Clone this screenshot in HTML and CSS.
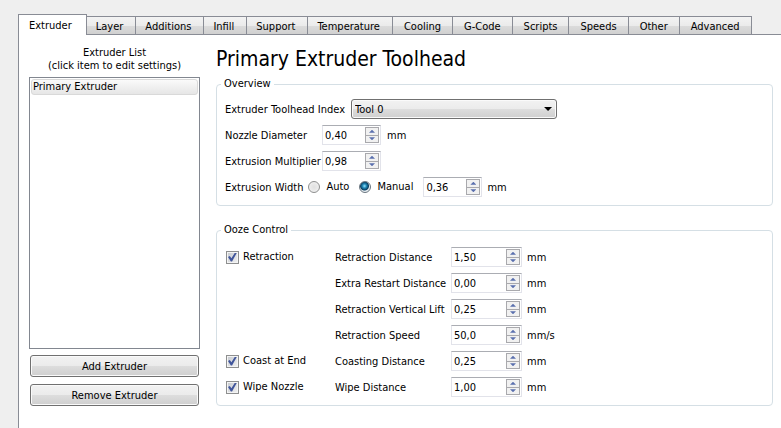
FILE: index.html
```html
<!DOCTYPE html>
<html lang="en">
<head>
<meta charset="utf-8">
<meta name="viewport" content="width=device-width, initial-scale=1">
<title>Extruder Settings</title>
<link rel="stylesheet" href="styles.css">
</head>
<body>
<nav class="tabs" role="tablist">
  <button class="tab tab-active" type="button" role="tab" aria-selected="true">Extruder</button>
  <button class="tab" type="button" role="tab">Layer</button>
  <button class="tab" type="button" role="tab">Additions</button>
  <button class="tab" type="button" role="tab">Infill</button>
  <button class="tab" type="button" role="tab">Support</button>
  <button class="tab" type="button" role="tab">Temperature</button>
  <button class="tab" type="button" role="tab">Cooling</button>
  <button class="tab" type="button" role="tab">G-Code</button>
  <button class="tab" type="button" role="tab">Scripts</button>
  <button class="tab" type="button" role="tab">Speeds</button>
  <button class="tab" type="button" role="tab">Other</button>
  <button class="tab" type="button" role="tab">Advanced</button>
</nav>
<main class="panel">
  <section class="side">
    <p class="caption">Extruder List<br>(click item to edit settings)</p>
    <ul class="list">
      <li><button class="list-item" type="button">Primary Extruder</button></li>
    </ul>
    <button class="push" type="button">Add Extruder</button>
    <button class="push" type="button">Remove Extruder</button>
  </section>
  <section class="content">
    <h1 class="title">Primary Extruder Toolhead</h1>
    <fieldset class="group">
      <legend>Overview</legend>
      <div class="row">
        <label class="text" for="tool">Extruder Toolhead Index</label>
        <span class="combo"><select id="tool"><option>Tool 0</option></select></span>
      </div>
      <div class="row">
        <label class="text name" for="nozzle">Nozzle Diameter</label>
        <span class="spin"><input id="nozzle" type="text" value="0,40"><span class="arrows"><button type="button" class="up" aria-label="Increase"></button><button type="button" class="down" aria-label="Decrease"></button></span></span>
        <span class="text">mm</span>
      </div>
      <div class="row">
        <label class="text name" for="mult">Extrusion Multiplier</label>
        <span class="spin"><input id="mult" type="text" value="0,98"><span class="arrows"><button type="button" class="up" aria-label="Increase"></button><button type="button" class="down" aria-label="Decrease"></button></span></span>
      </div>
      <div class="row row-tight">
        <span class="text">Extrusion Width</span>
        <label class="choice"><input class="radio" type="radio" name="width">Auto</label>
        <label class="choice"><input class="radio" type="radio" name="width" checked>Manual</label>
        <span class="spin"><input type="text" value="0,36" aria-label="Extrusion Width"><span class="arrows"><button type="button" class="up" aria-label="Increase"></button><button type="button" class="down" aria-label="Decrease"></button></span></span>
        <span class="text">mm</span>
      </div>
    </fieldset>
    <fieldset class="group">
      <legend>Ooze Control</legend>
      <div class="ooze">
        <label class="toggle"><input class="check" type="checkbox" checked>Retraction</label>
        <label class="text field" for="dist">Retraction Distance</label>
        <span class="spin"><input id="dist" type="text" value="1,50"><span class="arrows"><button type="button" class="up" aria-label="Increase"></button><button type="button" class="down" aria-label="Decrease"></button></span></span>
        <span class="text unit">mm</span>
        <label class="text field" for="restart">Extra Restart Distance</label>
        <span class="spin"><input id="restart" type="text" value="0,00"><span class="arrows"><button type="button" class="up" aria-label="Increase"></button><button type="button" class="down" aria-label="Decrease"></button></span></span>
        <span class="text unit">mm</span>
        <label class="text field" for="lift">Retraction Vertical Lift</label>
        <span class="spin"><input id="lift" type="text" value="0,25"><span class="arrows"><button type="button" class="up" aria-label="Increase"></button><button type="button" class="down" aria-label="Decrease"></button></span></span>
        <span class="text unit">mm</span>
        <label class="text field" for="speed">Retraction Speed</label>
        <span class="spin"><input id="speed" type="text" value="50,0"><span class="arrows"><button type="button" class="up" aria-label="Increase"></button><button type="button" class="down" aria-label="Decrease"></button></span></span>
        <span class="text unit">mm/s</span>
        <label class="toggle"><input class="check" type="checkbox" checked>Coast at End</label>
        <label class="text field" for="coast">Coasting Distance</label>
        <span class="spin"><input id="coast" type="text" value="0,25"><span class="arrows"><button type="button" class="up" aria-label="Increase"></button><button type="button" class="down" aria-label="Decrease"></button></span></span>
        <span class="text unit">mm</span>
        <label class="toggle"><input class="check" type="checkbox" checked>Wipe Nozzle</label>
        <label class="text field" for="wipe">Wipe Distance</label>
        <span class="spin"><input id="wipe" type="text" value="1,00"><span class="arrows"><button type="button" class="up" aria-label="Increase"></button><button type="button" class="down" aria-label="Decrease"></button></span></span>
        <span class="text unit">mm</span>
      </div>
    </fieldset>
  </section>
</main>
</body>
</html>
```
FILE: styles.css
```css
* { box-sizing: border-box; }

body {
  margin: 0;
  min-height: 100vh;
  display: flex;
  flex-direction: column;
  padding: 14px 0 0 18px;
  background: #efefef;
  color: #000;
  font: 11px/16px Tahoma, "DejaVu Sans Condensed", "DejaVu Sans", sans-serif;
}

button, input, select { font: inherit; color: inherit; margin: 0; }

/* Tab bar */
.tabs {
  display: flex;
  align-items: flex-end;
  position: relative;
  margin-bottom: -1px;
}
.tab {
  height: 19px;
  padding: 2px 12px 0 9px;
  border: 1px solid #898c95;
  background: linear-gradient(#f3f3f3, #ebebeb 50%, #dcdcdc 51%, #d0d0d0);
  line-height: 15px;
  white-space: nowrap;
}
.tab:nth-child(n + 7) { padding: 2px 11px 0; }
.tab + .tab { border-left-width: 0; }
.tab-active {
  height: 21px;
  padding: 0 14px 0 10px;
  border-bottom: 0;
  background: #fff;
}

/* Page */
.panel {
  flex: 1;
  display: flex;
  gap: 16px;
  padding: 10px 8px 22px 10px;
  border: 1px solid #898c95;
  border-width: 1px 0 0 1px;
  background: #fff;
}
.side {
  width: 171px;
  flex: none;
  display: flex;
  flex-direction: column;
}
.caption {
  margin: 0 0 5px;
  padding-top: 1px;
  line-height: 13px;
  text-align: center;
}
.list {
  flex: 1;
  margin: 0;
  padding: 1px;
  border: 1px solid #828790;
  list-style: none;
}
.list-item {
  display: block;
  width: 100%;
  height: 16px;
  padding: 0 1px;
  border: 1px solid #d9d9d9;
  border-radius: 3px;
  background: linear-gradient(#fafafa, #e6e6e6);
  line-height: 14px;
  text-align: left;
}
.push {
  height: 22px;
  margin: 6px 1px 0;
  padding: 1px 0 0;
  border: 1px solid #707070;
  border-radius: 3px;
  box-shadow: inset 0 0 0 1px #fafafa;
  background: linear-gradient(#f2f2f2, #ebebeb 50%, #dddddd 51%, #cfcfcf);
}
.push + .push { margin-top: 7px; }

.content { flex: 1; min-width: 0; }
.title {
  margin: 0 0 3px;
  font-size: 21px;
  font-weight: 400;
  line-height: 28px;
}
.group {
  margin: 0;
  padding: 7px 8px 8px;
  border: 1px solid #d5dfe5;
  border-radius: 4px;
}
.group + .group { margin-top: 16px; }
.group legend { margin-left: -4px; padding: 0 3px; }

.row {
  display: flex;
  align-items: center;
  height: 20px;
  gap: 6px;
}
.row + .row { margin-top: 6px; }
.row-tight { gap: 5px; }
.text { padding-top: 2px; white-space: nowrap; }
.name { width: 91px; }

.combo {
  display: grid;
  align-items: center;
  width: 206px;
}
.combo select {
  grid-area: 1 / 1;
  appearance: none;
  height: 20px;
  padding: 1px 3px 0;
  border: 1px solid #707070;
  border-radius: 3px;
  box-shadow: inset 0 0 0 1px #fafafa;
  background: linear-gradient(#f2f2f2, #ebebeb 50%, #dddddd 51%, #cfcfcf);
}
.combo::after {
  content: "";
  grid-area: 1 / 1;
  justify-self: end;
  width: 8px;
  height: 4px;
  margin-right: 5px;
  background: #000;
  clip-path: polygon(0 0, 100% 0, 50% 100%);
  pointer-events: none;
}

/* Number box with step arrows */
.spin {
  display: flex;
  width: 59px;
  height: 20px;
  padding: 1px;
  border: 1px solid #e2e3ea;
  border-top-color: #abadb3;
  background: #fff;
}
.spin input {
  flex: 1;
  width: 0;
  min-width: 0;
  padding: 2px 1px 0;
  border: 0;
  outline: 0;
  background: none;
}
.arrows {
  display: flex;
  flex-direction: column;
  width: 14px;
  border: 1px solid #a9a9ad;
}
.arrows button {
  flex: 1;
  display: grid;
  place-items: center;
  padding: 0;
  border: 0;
  background: #f1f1f1;
}
.arrows button + button { border-top: 1px solid #a9a9ad; }
.arrows button::before {
  content: "";
  width: 6px;
  height: 3px;
  background: #5a6fae;
  clip-path: polygon(50% 0, 100% 100%, 0 100%);
}
.arrows .down::before { clip-path: polygon(0 0, 100% 0, 50% 100%); }

/* Radio buttons and tick boxes */
.choice, .toggle { display: flex; align-items: center; }
.choice { gap: 6px; margin-right: 5px; }
.toggle { grid-column: 1; gap: 4px; padding-left: 1px; }
.radio, .check {
  appearance: none;
  display: grid;
  place-items: center;
  width: 13px;
  height: 13px;
  border: 1px solid #8e8f8f;
}
.radio {
  width: 12px;
  height: 12px;
  border-radius: 50%;
  background: radial-gradient(#e0e0e0, #f4f4f4);
}
.radio:checked {
  border-color: #6a7680;
  background: radial-gradient(circle at 45% 40%, #9be4f8 0, #2189b8 2px, #0b3f60 4px, #e8eef2 5px);
}
.check {
  box-shadow: inset 0 0 0 1px #f4f4f4;
  background: linear-gradient(135deg, #c4c8ce, #f3f3f3);
}
.check:checked::before {
  content: "";
  width: 9px;
  height: 9px;
  background: #40559b;
  clip-path: polygon(0 50%, 20% 40%, 38% 65%, 78% 0, 100% 0, 45% 100%, 32% 100%);
}

.ooze {
  display: grid;
  grid-template-columns: 110px 116px 71px auto;
  grid-auto-rows: 20px;
  row-gap: 6px;
  align-items: center;
  justify-content: start;
  margin-top: 2px;
}
.field { grid-column: 2; }
.ooze .spin { width: auto; }
.unit { margin-left: 5px; }
```
